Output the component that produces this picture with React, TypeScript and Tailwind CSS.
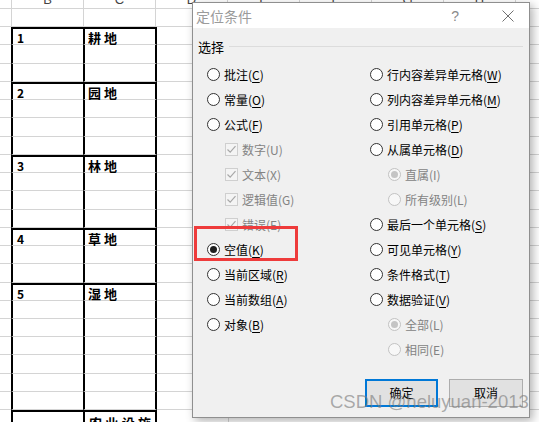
import React from 'react';

type Item = {
  kind: 'radio' | 'check' | 'sub';
  label: string;
  k: string;
  on?: boolean;
  off?: boolean;
};

const leftItems: Item[] = [
  { kind: 'radio', label: '批注', k: 'C' },
  { kind: 'radio', label: '常量', k: 'O' },
  { kind: 'radio', label: '公式', k: 'F' },
  { kind: 'check', label: '数字', k: 'U', on: true, off: true },
  { kind: 'check', label: '文本', k: 'X', on: true, off: true },
  { kind: 'check', label: '逻辑值', k: 'G', on: true, off: true },
  { kind: 'check', label: '错误', k: 'E', on: true, off: true },
  { kind: 'radio', label: '空值', k: 'K', on: true },
  { kind: 'radio', label: '当前区域', k: 'R' },
  { kind: 'radio', label: '当前数组', k: 'A' },
  { kind: 'radio', label: '对象', k: 'B' },
];

const rightItems: Item[] = [
  { kind: 'radio', label: '行内容差异单元格', k: 'W' },
  { kind: 'radio', label: '列内容差异单元格', k: 'M' },
  { kind: 'radio', label: '引用单元格', k: 'P' },
  { kind: 'radio', label: '从属单元格', k: 'D' },
  { kind: 'sub', label: '直属', k: 'I', on: true, off: true },
  { kind: 'sub', label: '所有级别', k: 'L', off: true },
  { kind: 'radio', label: '最后一个单元格', k: 'S' },
  { kind: 'radio', label: '可见单元格', k: 'Y' },
  { kind: 'radio', label: '条件格式', k: 'T' },
  { kind: 'radio', label: '数据验证', k: 'V' },
  { kind: 'sub', label: '全部', k: 'L', on: true, off: true },
  { kind: 'sub', label: '相同', k: 'E', off: true },
];

// spreadsheet rows: block start rows carry the text
const blocks: Record<number, { b: string; c: string }> = {
  1: { b: '1', c: '耕地' },
  4: { b: '2', c: '园地' },
  8: { b: '3', c: '林地' },
  12: { b: '4', c: '草地' },
  15: { b: '5', c: '湿地' },
  22: { b: '', c: '农业设施' },
};

const Radio = ({ on, off }: { on?: boolean; off?: boolean }) => (
  <span
    className={`w-[13px] h-[13px] shrink-0 rounded-full border flex items-center justify-center ${
      off ? 'border-[#c2c2c2] bg-[#f7f7f7]' : 'border-[#333333] bg-white'
    }`}
  >
    {on && <span className={`w-[7px] h-[7px] rounded-full ${off ? 'bg-[#c4c4c4]' : 'bg-[#1f1f1f]'}`} />}
  </span>
);

const Check = () => (
  <span className="w-[13px] h-[13px] shrink-0 border border-[#cfcfcf] bg-[#f4f4f4] flex items-center justify-center">
    <svg width="11" height="11" viewBox="0 0 11 11">
      <path d="M1.5 5.5 L4.2 8.2 L9.5 2.2" fill="none" stroke="#a8a8a8" strokeWidth="1.2" />
    </svg>
  </span>
);

const Option = ({ it }: { it: Item }) => (
  <div className={`h-[25px] flex items-center ${it.kind === 'radio' ? '' : 'pl-[18px]'}`}>
    {it.kind === 'check' ? <Check /> : <Radio on={it.on} off={it.off} />}
    <span className={`ml-[4px] text-[12px] leading-none whitespace-nowrap ${it.off ? 'text-[#838383]' : 'text-black'}`}>
      {it.label}(
      {it.off ? it.k : <span className="underline underline-offset-2">{it.k}</span>})
    </span>
  </div>
);

const SheetRow = ({ i }: { i: number }) => {
  const inTable = i >= 1;
  const start = blocks[i];
  const top = start ? 'border-t-2 border-t-black' : '';
  return (
    <div className="flex h-[18.24px] shrink-0">
      <div className={`h-full border-b border-[#d4d4d4] ${inTable ? 'w-[11px]' : 'w-[12px] border-r'}`} />
      <div
        className={`h-full border-b border-[#d4d4d4] flex items-start pl-[4px] pt-[2px] text-[12px] font-bold leading-[14px] ${
          inTable ? `w-[72px] border-l-2 border-l-black ${top}` : 'w-[72px] border-r'
        }`}
      >
        {start?.b}
      </div>
      <div
        className={`h-full border-b border-[#d4d4d4] flex items-start pt-[1px] text-[13px] font-bold leading-[15px] ${
          inTable ? `w-[74px] border-l-2 border-l-black border-r-2 border-r-black ${top}` : 'w-[72px] border-r'
        } ${start && start.c.length > 2 ? 'justify-between px-[4px] pt-[3px]' : 'pl-[3px] tracking-[3px]'}`}
      >
        {start && start.c.length > 2
          ? start.c.split('').map((ch, j) => <span key={j}>{ch}</span>)
          : start?.c}
      </div>
      <div className="h-full w-[72px] border-b border-r border-[#d4d4d4]" />
      <div className="h-full flex-1 border-b border-[#d4d4d4]" />
    </div>
  );
};

export default function App() {
  const letters = ['B', 'C', 'D', 'E', 'F', 'G', 'H'];
  return (
    <div
      className="relative w-[539px] h-[422px] overflow-hidden bg-white"
      style={{ fontFamily: '"Noto Sans CJK SC", "Liberation Sans", sans-serif' }}
    >
      {/* sheet */}
      <div className="flex flex-col">
        <div className="flex h-[9px] border-b border-[#d4d4d4] overflow-hidden">
          <div className="w-[12px] border-r border-[#d4d4d4]" />
          {letters.map((l) => (
            <div key={l} className="w-[72px] shrink-0 border-r border-[#d4d4d4] flex justify-center">
              <span className="text-[13px] leading-[13px] text-[#444] -mt-[7px]" style={{ fontFamily: '"Liberation Sans", sans-serif' }}>
                {l}
              </span>
            </div>
          ))}
        </div>
        {Array.from({ length: 23 }, (_, i) => (
          <SheetRow key={i} i={i} />
        ))}
      </div>

      {/* dialog */}
      <div className="absolute left-[192px] top-[2px] w-[338px] h-[416px] border border-[#8f8f8f] bg-[#f0f0f0] flex flex-col shadow-[3px_3px_9px_rgba(0,0,0,0.3)]">
        <div className="h-[25px] bg-white flex items-center pl-[3px] shrink-0">
          <span className="text-[14px] text-[#9b9b9b] leading-none">定位条件</span>
          <span className="ml-auto text-[14px] text-[#8a8a8a] leading-none mr-[43px]" style={{ fontFamily: '"Liberation Sans", sans-serif' }}>
            ?
          </span>
          <svg width="12" height="12" viewBox="0 0 12 12" className="mr-[15px]">
            <path d="M0.5 0.5 L11.5 11.5 M11.5 0.5 L0.5 11.5" stroke="#707070" strokeWidth="1" />
          </svg>
        </div>
        <div className="relative flex-1 flex flex-col pt-[10px]">
          <div className="h-[16px] flex items-center pl-[5px] pr-[6px]">
            <span className="text-[13px] leading-none text-black">选择</span>
            <span className="flex-1 h-px bg-[#dcdcdc] ml-[5px]" />
          </div>
          <div className="flex mt-[8px] pl-[14px]">
            <div className="w-[163px] flex flex-col">
              {leftItems.map((it, i) => (
                <Option key={i} it={it} />
              ))}
            </div>
            <div className="flex flex-col">
              {rightItems.map((it, i) => (
                <Option key={i} it={it} />
              ))}
            </div>
          </div>
          <div className="mt-auto flex justify-end gap-[11px] pr-[6px] pb-[10px]">
            <button className="w-[73px] h-[28px] border-2 border-[#0078d7] bg-[#e1e1e1] text-[12px] text-black">确定</button>
            <button className="w-[74px] h-[28px] border border-[#adadad] bg-[#e1e1e1] text-[12px] text-black">取消</button>
          </div>
          {/* red highlight */}
          <div className="absolute left-[1px] top-[198px] w-[104px] h-[35px] border-[3px] border-[#ee3b3b]" />
        </div>
      </div>

      {/* watermark */}
      <div
        className="absolute left-[330px] top-[393px] text-[18.5px] leading-none text-[rgba(120,120,120,0.6)] whitespace-nowrap"
        style={{ fontFamily: '"Liberation Sans", sans-serif' }}
      >
        CSDN @heluyuan-2013
      </div>
    </div>
  );
}
